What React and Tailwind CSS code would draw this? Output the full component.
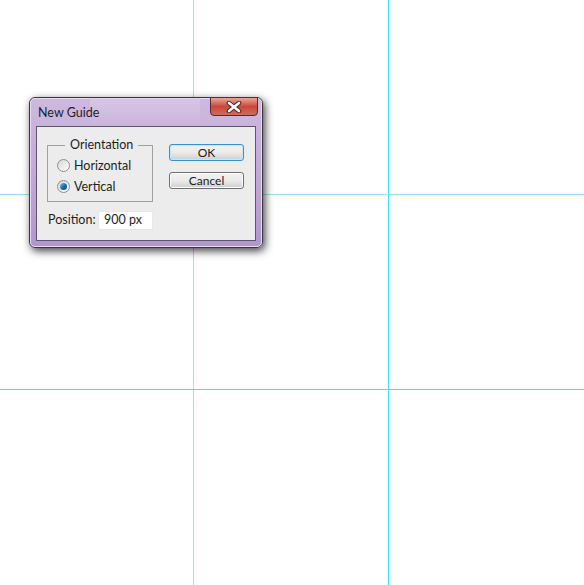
import React from 'react';

const font = { fontFamily: 'Lato, "Open Sans", "Liberation Sans", sans-serif' };

function Radio({ checked }) {
  return (
    <span className="relative w-[13px] h-[13px] rounded-full border border-[#8e8f8f] bg-gradient-to-br from-[#d6d6d6] to-[#ffffff] flex items-center justify-center shrink-0">
      {checked && (
        <span className="w-[7px] h-[7px] rounded-full bg-gradient-to-br from-[#7fc4ee] via-[#1d6fae] to-[#0c4d84]" />
      )}
    </span>
  );
}

function Button({ children, focused }) {
  return (
    <button
      className={`w-[75px] h-[17px] rounded-[3px] text-[12px] leading-none text-[#1a1a1a] flex items-center justify-center bg-gradient-to-b from-[#f2f2f2] via-[#ebebeb] to-[#cfcfcf] ${
        focused ? 'border border-[#3c8fd0] shadow-[inset_0_0_0_1px_#c5e6fa]' : 'border border-[#707070] shadow-[inset_0_0_0_1px_#fcfcfc]'
      }`}
    >
      {children}
    </button>
  );
}

function CloseX() {
  return (
    <svg width="16" height="12" viewBox="0 0 16 12">
      <path d="M3 2 L13 10 M13 2 L3 10" stroke="#4a2a28" strokeWidth="4.6" strokeLinecap="round" />
      <path d="M3 2 L13 10 M13 2 L3 10" stroke="#ffffff" strokeWidth="2.6" strokeLinecap="round" />
    </svg>
  );
}

export default function App() {
  return (
    <div className="relative w-[584px] h-[585px] bg-white overflow-hidden text-[12.5px]" style={font}>
      {/* guides */}
      <div className="absolute top-0 bottom-0 left-[193px] w-px bg-[#8ee9f0]" />
      <div className="absolute top-0 bottom-0 left-[388px] w-px bg-[#3fe6f0]" />
      <div className="absolute left-0 right-0 top-[194px] h-px bg-[#8ee9f0]" />
      <div className="absolute left-0 right-0 top-[389px] h-px bg-[#3fe6f0]" />

      {/* dialog window */}
      <div className="absolute left-[29px] top-[97px] w-[234px] h-[151px] rounded-[6px] border border-[#3b3542] bg-gradient-to-b from-[#cdb9de] via-[#c2aad8] to-[#b196cd] shadow-[2px_3px_8px_rgba(0,0,0,0.75)] flex flex-col px-[6px] pb-[6px]">
        <div className="absolute inset-0 rounded-[5px] border border-[#e6dcef] pointer-events-none" />
        <div className="absolute left-[60px] top-0 w-[110px] h-[28px] bg-gradient-to-b from-[#dccbea] to-transparent opacity-70 pointer-events-none" />
        <div className="relative h-[28px] flex items-start">
          <span className="text-[12.5px] text-[#1e1e1e] mt-[6px] ml-[2px]">New Guide</span>
          <div className="absolute right-[-2px] top-[-1px] w-[48px] h-[19px] rounded-b-[4px] border border-[#5a2a2a] bg-gradient-to-b from-[#e8a59a] via-[#c9473a] to-[#d26a5c] flex items-center justify-center">
            <CloseX />
          </div>
        </div>
        <div className="relative flex-1 border border-[#5d566a] bg-[#ececec] flex flex-col">
          <div className="flex pl-[10px] pt-[18px]">
            <div className="relative w-[106px] h-[57px] border border-[#a0a0a0] flex flex-col gap-[8px] pt-[13px] pl-[9px]">
              <span className="absolute left-[17px] top-[-9px] bg-[#ececec] px-[5px] text-[12.5px] leading-[16px] text-[#1e1e1e]">
                Orientation
              </span>
              <label className="flex items-center gap-[4px] text-[12.5px] leading-[13px] text-[#1e1e1e]">
                <Radio />
                Horizontal
              </label>
              <label className="flex items-center gap-[4px] text-[12.5px] leading-[13px] text-[#1e1e1e]">
                <Radio checked />
                Vertical
              </label>
            </div>
            <div className="flex flex-col gap-[11px] ml-[16px] mt-[-1px]">
              <Button focused>OK</Button>
              <Button>Cancel</Button>
            </div>
          </div>
          <div className="flex items-center pl-[11px] mt-[9px]">
            <span className="w-[50px] text-[12.5px] text-[#1e1e1e]">Position:</span>
            <div className="w-[55px] h-[19px] bg-white border border-[#e3e9ef] flex items-center pl-[5px] text-[12.5px] text-[#1e1e1e]">
              900 px
            </div>
          </div>
        </div>
      </div>
    </div>
  );
}
